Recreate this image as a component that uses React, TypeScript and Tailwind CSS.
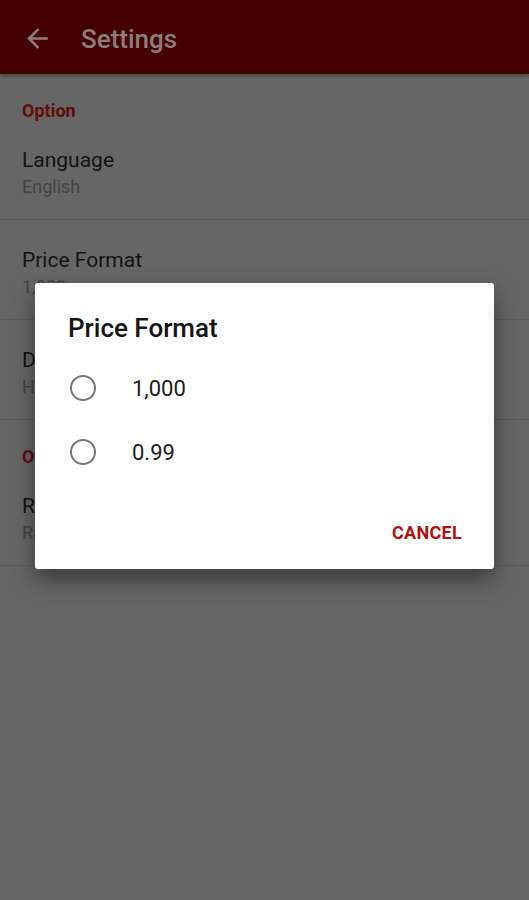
import React from 'react';

const font = { fontFamily: 'Roboto, "Noto Sans", sans-serif' };

const sections = [
  {
    title: 'Option',
    rows: [
      { title: 'Language', value: 'English' },
      { title: 'Price Format', value: '1,000' },
      { title: 'Display', value: 'Hide' },
    ],
  },
  {
    title: 'Other',
    rows: [{ title: 'Rate', value: 'Rate this app' }],
  },
];

const options = ['1,000', '0.99'];

const App: React.FC = () => {
  return (
    <div className="relative w-[529px] h-[900px] overflow-hidden bg-[#666666]" style={font}>
      {/* Toolbar (dimmed) */}
      <header className="h-[74px] pt-[4px] bg-[#450000] flex items-center shadow-[0_2px_4px_rgba(0,0,0,0.35)]">
        <svg className="ml-[22px] w-[31px] h-[31px] -mt-[2px]" viewBox="0 0 24 24" fill="#8c7c7c">
          <path d="M20 11H7.83l5.59-5.59L12 4l-8 8 8 8 1.41-1.41L7.83 13H20v-2z" />
        </svg>
        <h1 className="ml-[28px] text-[26px] font-medium text-[#8c7c7c] leading-none">Settings</h1>
      </header>

      {/* Preference list */}
      {sections.map((section) => (
        <div key={section.title}>
          <div className="h-[46px] pt-[27px] px-[22px]">
            <p className="text-[18px] leading-[20px] font-bold text-[#650b0b]">{section.title}</p>
          </div>
          {section.rows.map((row) => (
            <div key={row.title} className="h-[100px] px-[22px] pt-[25px] border-b border-[#5b5b5b]">
              <p className="text-[21px] leading-[30px] text-[#141414]">{row.title}</p>
              <p className="text-[18px] leading-[24px] text-[#454545]">{row.value}</p>
            </div>
          ))}
        </div>
      ))}

      {/* Dialog */}
      <div className="absolute left-[35px] top-[283px] w-[459px] h-[286px] bg-white rounded-[3px] shadow-[0_10px_24px_rgba(0,0,0,0.45)] flex flex-col">
        <h2 className="pt-[29px] pl-[33px] text-[26px] leading-[32px] font-medium text-[#141414]">Price Format</h2>
        <div className="mt-[12px] flex flex-col">
          {options.map((opt) => (
            <div key={opt} className="h-[64px] flex items-center pl-[35px]">
              <span className="w-[26px] h-[26px] rounded-full border-2 border-[#767676]" />
              <span className="ml-[36px] text-[22px] text-[#1c1c1c]">{opt}</span>
            </div>
          ))}
        </div>
        <div className="mt-[24px] flex justify-end pr-[22px]">
          <button className="h-[48px] px-[10px] text-[18px] font-bold tracking-[0.3px] text-[#b0100f]">CANCEL</button>
        </div>
      </div>
    </div>
  );
};

export default App;
